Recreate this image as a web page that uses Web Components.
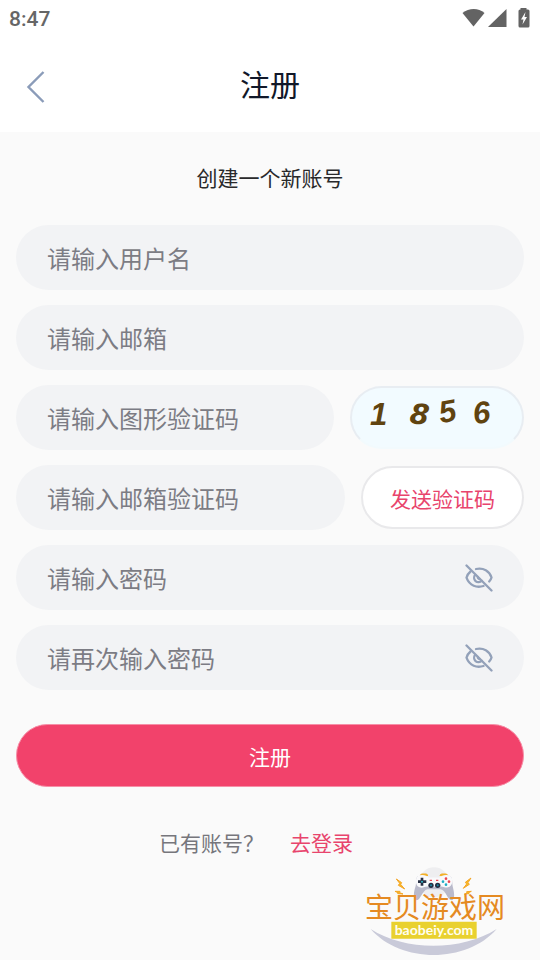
<!DOCTYPE html>
<html lang="zh-CN">
<head>
<meta charset="utf-8">
<meta name="viewport" content="width=device-width, initial-scale=1">
<title>注册</title>
<style>
  body {
    margin: 0;
    background: #fafafa;
    font-family: "Noto Sans CJK SC", sans-serif;
  }
</style>
</head>
<body>
<register-page></register-page>

<script>
const define = (name, html, setup) => {
  const template = document.createElement('template');
  template.innerHTML = html;
  customElements.define(name, class extends HTMLElement {
    constructor() {
      super();
      this.attachShadow({ mode: 'open' }).append(template.content.cloneNode(true));
    }
    connectedCallback() {
      if (setup) setup(this, this.shadowRoot);
    }
  });
};

define('status-bar', `
  <style>
    :host { display: flex; justify-content: space-between; align-items: center; height: 36px; padding: 0 8px 0 9px; background: #fff; color: #666; font: 500 21px/36px Roboto, sans-serif; }
    time { padding-top: 2px; }
    svg { display: block; }
  </style>
  <time>8:47</time>
  <svg width="70" height="20" viewBox="0 0 70 20" fill="#636363" role="img" aria-label="Wi-Fi, 信号, 充电中">
    <path d="M0.500 5C7-.4 16.500-.4 22.500 5L11.500 18.500Z"/>
    <path d="M26 19 44.500 1V19Z"/>
    <path d="M58.500 1.500V0H64.500V1.500H66Q67.500 1.500 67.500 3V18Q67.500 19.500 66 19.500H58Q56.500 19.500 56.500 18V3Q56.500 1.500 58 1.500Z"/>
    <path d="M63.500 4 59 11.500H61.500L60.500 16.500 65 9H62.500Z" fill="#fff"/>
  </svg>`);

define('page-header', `
  <style>
    :host { display: grid; grid-template-columns: 72px 1fr 72px; align-items: center; height: 96px; background: #fff; color: #111829; }
    button { display: flex; justify-content: center; padding: 0; border: 0; background: none; }
    svg { display: block; margin-top: 6px; }
    h1 { margin: 0; padding-bottom: 2px; font-size: 30px; line-height: 44px; font-weight: 400; text-align: center; }
  </style>
  <button type="button" aria-label="返回">
    <svg width="20" height="34" viewBox="0 0 20 34" fill="none" stroke="#8b9cb9" stroke-width="2.400"><path d="M17.500 2 2.500 17 17.500 32"/></svg>
  </button>
  <h1><slot></slot></h1>`);

define('text-field', `
  <style>
    :host { display: flex; align-items: center; box-sizing: border-box; height: 65px; min-width: 0; padding: 0 31px; border-radius: 33px; background: #f2f3f5; }
    input { flex: 1; min-width: 0; width: 100%; padding: 0; border: 0; outline: 0; background: none; color: #333; font: 24px/36px "Noto Sans CJK SC", sans-serif; }
    input::placeholder { color: #7c7c84; opacity: 1; }
    button { display: none; padding: 0; border: 0; background: none; }
    :host([type="password"]) button { display: block; }
    svg { display: block; }
  </style>
  <input>
  <button type="button" aria-label="显示密码">
    <svg width="28" height="28" viewBox="0 0 28 28" fill="none" stroke="#93a1b9" stroke-width="2.300" stroke-linecap="round">
      <path d="M1.500 1.500 26.500 26.500"/>
      <path d="M11 5C18.500 3.400 24.500 7 26.500 13.500Q26 15.500 24.200 17.500"/>
      <path d="M5.500 7.500Q2.500 10 1.500 13.700C4.500 22 12 24 18.500 22"/>
      <path d="M10.300 10.800A4.400 4.400 0 1 0 16.800 16.800"/>
      <path d="M12.800 13A1.800 1.800 0 0 0 14.500 15"/>
    </svg>
  </button>`, (host, root) => {
    const input = root.querySelector('input');
    input.type = host.getAttribute('type') || 'text';
    input.placeholder = host.getAttribute('label');
    input.setAttribute('aria-label', host.getAttribute('label'));
    root.querySelector('button').onclick = () => {
      input.type = input.type === 'password' ? 'text' : 'password';
    };
  });

define('captcha-image', `
  <style>
    :host { display: block; }
    button { display: block; box-sizing: border-box; width: 174px; height: 63px; margin-top: 1px; padding: 0; border: 2px solid #e8edf2; border-bottom-color: #f2fafd; border-radius: 32px; background: #f2fbff; overflow: hidden; }
    svg { display: block; }
    text { font: italic 700 31px "Liberation Sans", sans-serif; fill: #60430f; }
    .wide { font: italic 700 28px "DejaVu Sans", sans-serif; }
  </style>
  <button type="button" aria-label="刷新图形验证码">
    <svg width="170" height="59" viewBox="0 0 170 59">
      <text x="18" y="37">1</text>
      <text class="wide" x="58" y="36" transform="rotate(6 68 26)">8</text>
      <text x="87" y="34" transform="rotate(-10 95 24)">5</text>
      <text x="121" y="35" transform="rotate(-6 130 25)">6</text>
    </svg>
  </button>`);

define('pill-button', `
  <style>
    :host { display: block; }
    button { display: block; box-sizing: border-box; width: 100%; height: 63px; margin: 1px 0 0; padding: 0 27px; border: 2px solid #e9e9eb; border-radius: 32px; background: #fff; color: #e8446c; font: 21px/32px "Noto Sans CJK SC", sans-serif; white-space: nowrap; }
    :host([primary]) button { border: 1px solid #f68fa7; background: #f2426b; color: #fff; }
  </style>
  <button type="button"><slot></slot></button>`);

define('login-hint', `
  <style>
    :host { display: flex; justify-content: center; gap: 26px; padding-right: 28px; color: #76767c; font-size: 21px; line-height: 32px; }
    a { color: #e8446c; text-decoration: none; }
  </style>
  <span>已有账号？</span><a href="#login">去登录</a>`);

define('site-mark', `
  <style>
    :host { display: block; pointer-events: none; }
    svg { display: block; }
    .name { font: 28px "Liberation Sans", "Noto Sans CJK SC", sans-serif; fill: #e58a22; }
    .site { font: 700 14px Lato, sans-serif; fill: #fffef0; }
  </style>
  <svg width="170" height="100" viewBox="0 0 170 100" role="img" aria-label="宝贝游戏网">
    <g transform="scale(.33333)">
      <circle cx="252" cy="67" r="45" fill="#eeeef0"/>
      <path d="M62 207C165 274 335 274 440 207C350 311 152 311 62 207Z" fill="#c9cad9"/>
      <path d="M211 47Q211 42 217 42H228Q233 42 233 48M270 48Q270 42 276 42H287Q293 42 293 48" fill="#f5b52b" stroke="#f0ab22" stroke-width="3"/>
      <path d="M204 49C217 43 230 48 235 53H269C275 47 290 43 301 49C308 53 306 67 308 79C313 98 316 119 305 121C292 121 288 90 272 88H232C216 92 213 119 200 121C189 117 190 98 197 78C200 62 197 53 204 49Z" fill="#b9bacb"/>
      <path d="M204 48C217 42 230 47 235 52H269C275 46 290 42 301 48C311 56 309 79 294 82C285 85 279 78 269 80H235C225 78 219 86 209 82C194 77 196 54 204 48Z" fill="#f9f9fb"/>
      <path d="M212 53H220V61H229V69H220V77H212V69H204V61H212Z" fill="#283044"/>
      <circle cx="216" cy="65" r="3" fill="#31b9cc"/>
      <circle cx="288" cy="56" r="4" fill="#ed4550"/><circle cx="279" cy="65" r="4" fill="#20aec4"/><circle cx="297" cy="65" r="4" fill="#ed4550"/><circle cx="288" cy="74" r="4" fill="#20aec4"/>
      <circle cx="243" cy="76" r="8" fill="#252e43"/><circle cx="263" cy="76" r="8" fill="#252e43"/>
      <circle cx="243" cy="76" r="3" fill="#178ca5"/><circle cx="263" cy="76" r="3" fill="#178ca5"/>
      <path d="M239 61H246M258 61H265" stroke="#ed4550" stroke-width="4"/>
      <path d="M139 57 155 68 152 73 164 87 145 76 149 70ZM363 54 346 67 350 72 340 85 358 73 354 68ZM135 94 150 94 149 98 159 102 143 101 144 98ZM364 94 350 95 351 99 343 102 357 101 356 98Z" fill="#f8ba26" stroke="#f3a526" stroke-width="3"/>
      <path d="M124 185H380V236H124Z" fill="#e9d12f"/>
    </g>
    <text class="name" x="15" y="58">宝贝游戏网</text>
    <text class="site" x="84" y="75" text-anchor="middle">baobeiy.com</text>
  </svg>`);

define('register-page', `
  <style>
    :host { display: block; position: relative; box-sizing: border-box; min-height: 100vh; }
    main { padding: 29px 16px 40px; }
    h2 { margin: 0 0 32px; color: #29292b; font-size: 21px; line-height: 32px; font-weight: 400; text-align: center; }
    form { display: grid; gap: 15px; }
    .row { display: flex; gap: 16px; }
    .row text-field { flex: 1; }
    .submit { margin-top: 18px; }
    login-hint { margin-top: 39px; }
    site-mark { position: absolute; right: 20px; bottom: 0; }
  </style>
  <status-bar></status-bar>
  <page-header>注册</page-header>
  <main>
    <h2>创建一个新账号</h2>
    <form>
      <text-field label="请输入用户名"></text-field>
      <text-field label="请输入邮箱"></text-field>
      <div class="row"><text-field label="请输入图形验证码"></text-field><captcha-image></captcha-image></div>
      <div class="row"><text-field label="请输入邮箱验证码"></text-field><pill-button>发送验证码</pill-button></div>
      <text-field type="password" label="请输入密码"></text-field>
      <text-field type="password" label="请再次输入密码"></text-field>
      <pill-button class="submit" primary>注册</pill-button>
    </form>
    <login-hint></login-hint>
  </main>
  <site-mark></site-mark>`);
</script>
</body>
</html>
